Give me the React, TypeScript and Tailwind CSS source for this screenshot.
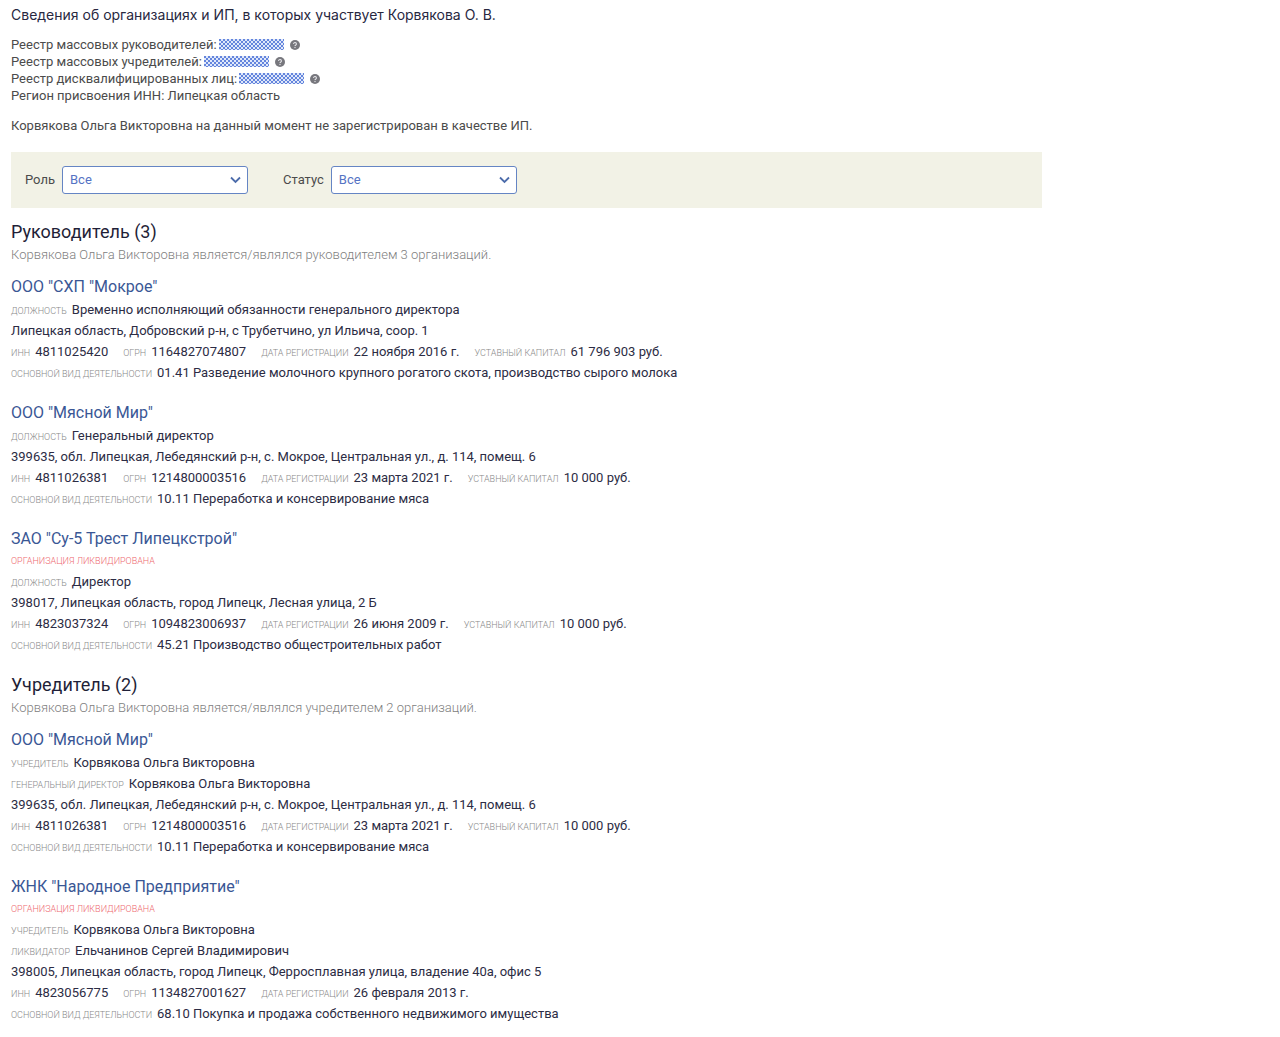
import { ReactNode, useId } from "react";

type Field = { label: string; value: string };
type Org = {
  name: string;
  liquidated?: boolean;
  people: Field[];
  address: string;
  facts: Field[];
  activity: string;
};

const meat = {
  name: 'ООО "Мясной Мир"',
  address: "399635, обл. Липецкая, Лебедянский р-н, с. Мокрое, Центральная ул., д. 114, помещ. 6",
  facts: [
    { label: "инн", value: "4811026381" },
    { label: "огрн", value: "1214800003516" },
    { label: "дата регистрации", value: "23 марта 2021 г." },
    { label: "уставный капитал", value: "10 000 руб." },
  ],
  activity: "10.11 Переработка и консервирование мяса",
};

const headOf: Org[] = [
  {
    name: 'ООО "СХП "Мокрое"',
    people: [{ label: "должность", value: "Временно исполняющий обязанности генерального директора" }],
    address: "Липецкая область, Добровский р-н, с Трубетчино, ул Ильича, соор. 1",
    facts: [
      { label: "инн", value: "4811025420" },
      { label: "огрн", value: "1164827074807" },
      { label: "дата регистрации", value: "22 ноября 2016 г." },
      { label: "уставный капитал", value: "61 796 903 руб." },
    ],
    activity: "01.41 Разведение молочного крупного рогатого скота, производство сырого молока",
  },
  { ...meat, people: [{ label: "должность", value: "Генеральный директор" }] },
  {
    name: 'ЗАО "Су-5 Трест Липецкстрой"',
    liquidated: true,
    people: [{ label: "должность", value: "Директор" }],
    address: "398017, Липецкая область, город Липецк, Лесная улица, 2 Б",
    facts: [
      { label: "инн", value: "4823037324" },
      { label: "огрн", value: "1094823006937" },
      { label: "дата регистрации", value: "26 июня 2009 г." },
      { label: "уставный капитал", value: "10 000 руб." },
    ],
    activity: "45.21 Производство общестроительных работ",
  },
];

const founderOf: Org[] = [
  {
    ...meat,
    people: [
      { label: "учредитель", value: "Корвякова Ольга Викторовна" },
      { label: "генеральный директор", value: "Корвякова Ольга Викторовна" },
    ],
  },
  {
    name: 'ЖНК "Народное Предприятие"',
    liquidated: true,
    people: [
      { label: "учредитель", value: "Корвякова Ольга Викторовна" },
      { label: "ликвидатор", value: "Ельчанинов Сергей Владимирович" },
    ],
    address: "398005, Липецкая область, город Липецк, Ферросплавная улица, владение 40а, офис 5",
    facts: [
      { label: "инн", value: "4823056775" },
      { label: "огрн", value: "1134827001627" },
      { label: "дата регистрации", value: "26 февраля 2013 г." },
    ],
    activity: "68.10 Покупка и продажа собственного недвижимого имущества",
  },
];

function LabelledValue({ label, value }: Field) {
  return (
    <div className="flex items-baseline gap-[5px]">
      <dt className="text-[9px] font-light uppercase leading-none text-[#8a8a8a]">{label}</dt>
      <dd>{value}</dd>
    </div>
  );
}

function OrgCard({ org }: { org: Org }) {
  return (
    <article className="text-[13px] leading-[21px] text-[#2c2c44]">
      <h3 className="text-[16px] leading-6">
        <a href="#" className="text-[#3a5795]">{org.name}</a>
      </h3>
      {org.liquidated && (
        <p className="text-[9px] font-light uppercase leading-5 text-[#ee6b72]">Организация ликвидирована</p>
      )}
      <dl>
        {org.people.map((p) => <LabelledValue key={p.label} {...p} />)}
      </dl>
      <p>{org.address}</p>
      <dl className="flex flex-wrap gap-x-[15px]">
        {org.facts.map((f) => <LabelledValue key={f.label} {...f} />)}
      </dl>
      <dl>
        <LabelledValue label="основной вид деятельности" value={org.activity} />
      </dl>
    </article>
  );
}

function Section({ title, note, orgs }: { title: string; note: string; orgs: Org[] }) {
  return (
    <section>
      <h2 className="text-[18px] leading-[26px] text-[#1f1f38]">{title}</h2>
      <p className="text-[13px] font-light leading-5 text-[#808080]">{note}</p>
      <div className="mt-[10px] flex flex-col gap-[18px]">
        {orgs.map((o) => <OrgCard key={o.name} org={o} />)}
      </div>
    </section>
  );
}

function HiddenResult() {
  const id = useId();
  return (
    <svg className="ml-[2px] h-[11px] w-[65px]" viewBox="0 0 65 11" aria-hidden="true">
      <defs>
        <pattern id={id} width="4" height="4" patternUnits="userSpaceOnUse">
          <rect width="4" height="4" fill="#dfe8fa" />
          <rect width="2" height="2" fill="#6485dd" />
          <rect x="2" y="2" width="2" height="2" fill="#6485dd" />
        </pattern>
      </defs>
      <rect width="65" height="11" fill={`url(#${id})`} />
    </svg>
  );
}

function Registry({ children }: { children: ReactNode }) {
  return (
    <li className="flex items-center">
      {children}
      <HiddenResult />
      <button type="button" aria-label="Подсказка" className="ml-[6px]">
        <svg className="h-[10px] w-[10px]" viewBox="0 0 10 10" aria-hidden="true">
          <circle cx="5" cy="5" r="5" fill="#77777d" />
          <path d="M3.6 4a1.4 1.4 0 1 1 2 1.2c-.45.25-.6.4-.6.8" fill="none" stroke="#e4e4e8" strokeWidth="1.1" />
          <circle cx="5" cy="7.5" r=".65" fill="#e4e4e8" />
        </svg>
      </button>
    </li>
  );
}

function Filter({ label }: { label: string }) {
  const id = useId();
  return (
    <div className="flex items-center gap-[7px]">
      <label htmlFor={id}>{label}</label>
      <div className="relative">
        <select
          id={id}
          className="h-7 w-[186px] appearance-none rounded-[3px] border border-[#6585c4] bg-white pl-[7px] pr-8 text-[#5573c4]"
        >
          <option>Все</option>
        </select>
        <svg className="pointer-events-none absolute right-[7px] top-[10px] h-2 w-[11px]" viewBox="0 0 11 8" aria-hidden="true">
          <path d="M1 1.5 5.5 6 10 1.5" fill="none" stroke="#4c6cab" strokeWidth="1.8" />
        </svg>
      </div>
    </div>
  );
}

export default function App() {
  return (
    <main className="bg-white px-[11px] pb-3 pt-[5px] font-['Roboto','Liberation_Sans',sans-serif] text-[13px] text-[#4b4b4b]">
      <h1 className="font-['Inter','Roboto',sans-serif] text-[14px] leading-5 text-[#28283f]">
        Сведения об организациях и ИП, в которых участвует Корвякова О. В.
      </h1>
      <ul className="mt-[11px] leading-[17px]">
        <Registry>Реестр массовых руководителей:</Registry>
        <Registry>Реестр массовых учредителей:</Registry>
        <Registry>Реестр дисквалифицированных лиц:</Registry>
        <li>Регион присвоения ИНН: Липецкая область</li>
      </ul>
      <p className="mt-3 leading-5">Корвякова Ольга Викторовна на данный момент не зарегистрирован в качестве ИП.</p>
      <form className="mt-4 flex max-w-[1031px] flex-wrap gap-[35px] bg-[#f2f2e6] p-[14px]">
        <Filter label="Роль" />
        <Filter label="Статус" />
      </form>
      <div className="mt-[11px] flex flex-col gap-[17px]">
        <Section
          title="Руководитель (3)"
          note="Корвякова Ольга Викторовна является/являлся руководителем 3 организаций."
          orgs={headOf}
        />
        <Section
          title="Учредитель (2)"
          note="Корвякова Ольга Викторовна является/являлся учредителем 2 организаций."
          orgs={founderOf}
        />
      </div>
    </main>
  );
}
